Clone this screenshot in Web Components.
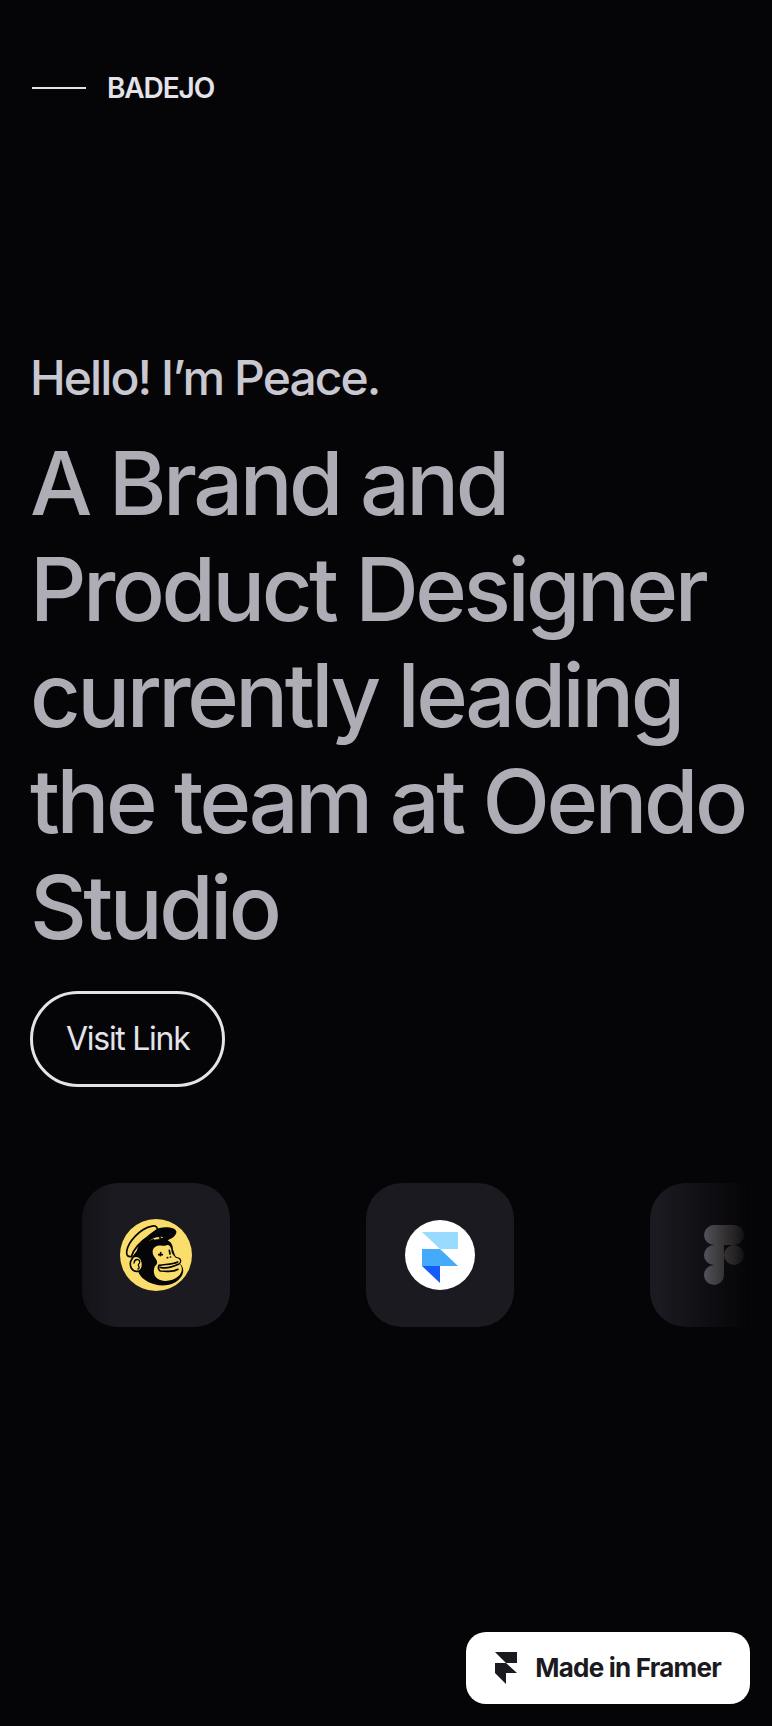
<!DOCTYPE html>
<html lang="en">
<head>
<meta charset="utf-8">
<meta name="viewport" content="width=device-width, initial-scale=1">
<title>Badejo</title>
<style>
  body {
    margin: 0;
    min-height: 100vh;
    background: #050507;
    color: #e4e3ea;
    font-family: Inter, 'Liberation Sans', sans-serif;
  }
</style>
</head>
<body>
<site-header>BADEJO</site-header>
<main>
  <hero-intro>
    <span slot="greeting">Hello! I’m Peace.</span>
    A Brand and Product Designer currently leading the team at Oendo Studio
    <pill-link slot="action" href="#work">Visit Link</pill-link>
  </hero-intro>
  <tool-ticker>
    <tool-card>
      <svg width="72" height="72" viewBox="15 12 216 216" role="img" aria-label="Mailchimp">
        <circle cx="123" cy="120" r="108" fill="#fbdd6b"/>
        <path d="M76 73C94 55 116 44 134 39C152 34 181 37 184 49C186 61 171 71 158 76C170 83 173 91 174 104C179 117 180 123 185 126C199 127 203 139 195 147C209 157 207 177 195 190C177 211 146 216 118 208C94 201 76 187 70 171C53 173 42 159 46 145C49 128 57 118 65 108Z" fill="#050507"/>
        <path d="M128 43C124 32 119 31 108 34C76 41 39 80 35 109C34 121 38 126 49 125C55 103 77 79 99 65C108 57 119 50 128 43Z" fill="#fbdd6b" stroke="#050507" stroke-width="5" stroke-linejoin="round"/>
        <path d="M54 126C65 119 80 126 82 142C85 158 77 171 64 169C51 168 43 154 47 139Z" fill="#fbdd6b" stroke="#050507" stroke-width="5"/>
        <path d="M57 144C59 130 74 131 74 141C75 145 70 146 70 150C73 157 73 161 69 162" fill="none" stroke="#050507" stroke-width="4" stroke-linecap="round"/>
        <path d="M120 96C131 88 143 93 151 92C160 86 167 94 169 103C168 115 176 122 183 129C195 130 198 138 192 145C190 147 185 149 181 150L194 148C205 158 201 174 190 184C173 199 143 203 126 190C114 180 115 164 120 154C129 145 128 138 120 128C110 117 111 102 120 96Z" fill="#fbdd6b"/>
        <path d="M132 151C148 147 171 150 188 141M132 151C129 157 130 165 136 168C153 168 171 174 189 163M136 157C152 161 171 157 190 148" fill="none" stroke="#050507" stroke-width="5" stroke-linecap="round"/>
        <path d="M131 119L142 119M137 113L136 122M163 106L165 117M157 128h1M166 126h1" fill="none" stroke="#050507" stroke-width="5" stroke-linecap="round"/>
        <path d="M101 79C112 70 122 66 135 66C130 69 128 71 137 72C130 73 123 73 117 74C120 71 116 70 101 79ZM136 65L145 66L140 70Z" fill="#fbdd6b"/>
      </svg>
    </tool-card>
    <tool-card>
      <svg width="70" height="70" viewBox="0 0 70 70" role="img" aria-label="Framer">
        <circle cx="35" cy="35" r="35" fill="#fff"/>
        <path d="M17 12H53V29H35Z" fill="#99daff"/>
        <path d="M17 29H35L53 46H17Z" fill="#44aaf9"/>
        <path d="M17 46H35V63Z" fill="#155cf8"/>
      </svg>
    </tool-card>
    <tool-card>
      <svg width="40" height="60" viewBox="0 0 40 60" role="img" aria-label="Figma">
        <defs>
          <linearGradient id="figma" gradientUnits="userSpaceOnUse" x1="0" x2="40" y1="0" y2="0">
            <stop offset="0.2" stop-color="#a09faa"/>
            <stop offset="0.5" stop-color="#b3a49f"/>
            <stop offset="1" stop-color="#c4c3dc"/>
          </linearGradient>
        </defs>
        <g fill="url(#figma)">
          <path d="M10 0H30A10 10 0 0 1 30 20H10A10 10 0 0 1 10 0Z"/>
          <path d="M10 20H20V40H10A10 10 0 0 1 10 20Z"/>
          <path d="M10 40H20V50A10 10 0 1 1 10 40Z"/>
          <circle cx="30" cy="30" r="10"/>
        </g>
      </svg>
    </tool-card>
  </tool-ticker>
</main>
<framer-badge>Made in Framer</framer-badge>

<script>
class SiteHeader extends HTMLElement {
  connectedCallback() {
    this.attachShadow({ mode: 'open' });
    this.shadowRoot.innerHTML = `
      <style>
        :host { display: block; padding: 70px 32px 0; }
        a {
          display: flex;
          align-items: center;
          gap: 21px;
          color: inherit;
          text-decoration: none;
          font-size: 28px;
          font-weight: 600;
          line-height: 36px;
          letter-spacing: -0.04em;
        }
        .rule { width: 54px; height: 2px; background: currentColor; }
      </style>
      <header>
        <a href="#"><span class="rule"></span><slot></slot></a>
      </header>
    `;
  }
}

class HeroIntro extends HTMLElement {
  connectedCallback() {
    this.attachShadow({ mode: 'open' });
    this.shadowRoot.innerHTML = `
      <style>
        :host {
          display: flex;
          flex-direction: column;
          align-items: flex-start;
          padding: 243px 20px 0 30px;
        }
        p, h1 { letter-spacing: -0.04em; }
        p {
          margin: 0 0 23px;
          color: #c9c8d0;
          font-size: 48px;
          font-weight: 500;
          line-height: 58px;
        }
        h1 {
          margin: 0 0 31px;
          color: #aeacb5;
          font-size: 88px;
          font-weight: 500;
          line-height: 106px;
        }
      </style>
      <p><slot name="greeting"></slot></p>
      <h1><slot></slot></h1>
      <slot name="action"></slot>
    `;
  }
}

class PillLink extends HTMLElement {
  connectedCallback() {
    this.attachShadow({ mode: 'open' });
    this.shadowRoot.innerHTML = `
      <style>
        :host { display: block; }
        a {
          display: block;
          padding: 25px 33px;
          border: 3px solid #e4e3ea;
          border-radius: 48px;
          color: #e4e3ea;
          text-decoration: none;
          font-size: 32px;
          font-weight: 400;
          line-height: 40px;
          letter-spacing: -0.04em;
        }
        a:hover { background: #1b1a21; }
      </style>
      <a href="${this.getAttribute('href')}"><slot></slot></a>
    `;
  }
}

class ToolTicker extends HTMLElement {
  connectedCallback() {
    this.attachShadow({ mode: 'open' });
    this.shadowRoot.innerHTML = `
      <style>
        :host {
          display: flex;
          gap: 136px;
          margin: 96px 22px 0;
          padding-left: 60px;
          overflow: hidden;
          /* fade both ends of the strip */
          -webkit-mask-image: linear-gradient(to right, transparent, #000 12.5%, #000 87.5%, transparent);
          mask-image: linear-gradient(to right, transparent, #000 12.5%, #000 87.5%, transparent);
        }
      </style>
      <slot></slot>
    `;
  }
}

class ToolCard extends HTMLElement {
  connectedCallback() {
    this.attachShadow({ mode: 'open' });
    this.shadowRoot.innerHTML = `
      <style>
        :host {
          display: flex;
          flex: none;
          align-items: center;
          justify-content: center;
          width: 148px;
          height: 144px;
          border-radius: 36px;
          background: #1b1a21;
        }
      </style>
      <slot></slot>
    `;
  }
}

class FramerBadge extends HTMLElement {
  connectedCallback() {
    this.attachShadow({ mode: 'open' });
    this.shadowRoot.innerHTML = `
      <style>
        :host { position: fixed; right: 22px; bottom: 22px; }
        a {
          display: flex;
          align-items: center;
          gap: 18px;
          padding: 20px 29px;
          border-radius: 20px;
          background: #fff;
          color: #1b1a21;
          text-decoration: none;
          font-size: 26px;
          font-weight: 700;
          line-height: 32px;
          letter-spacing: -0.03em;
        }
        svg { display: block; }
      </style>
      <a href="#framer">
        <svg width="22" height="32" viewBox="0 0 22 32" aria-hidden="true">
          <path d="M0 0H22V11H11ZM0 11H11L22 21H11V32L0 21Z" fill="currentColor"/>
        </svg>
        <slot></slot>
      </a>
    `;
  }
}

customElements.define('site-header', SiteHeader);
customElements.define('hero-intro', HeroIntro);
customElements.define('pill-link', PillLink);
customElements.define('tool-ticker', ToolTicker);
customElements.define('tool-card', ToolCard);
customElements.define('framer-badge', FramerBadge);
</script>
</body>
</html>
